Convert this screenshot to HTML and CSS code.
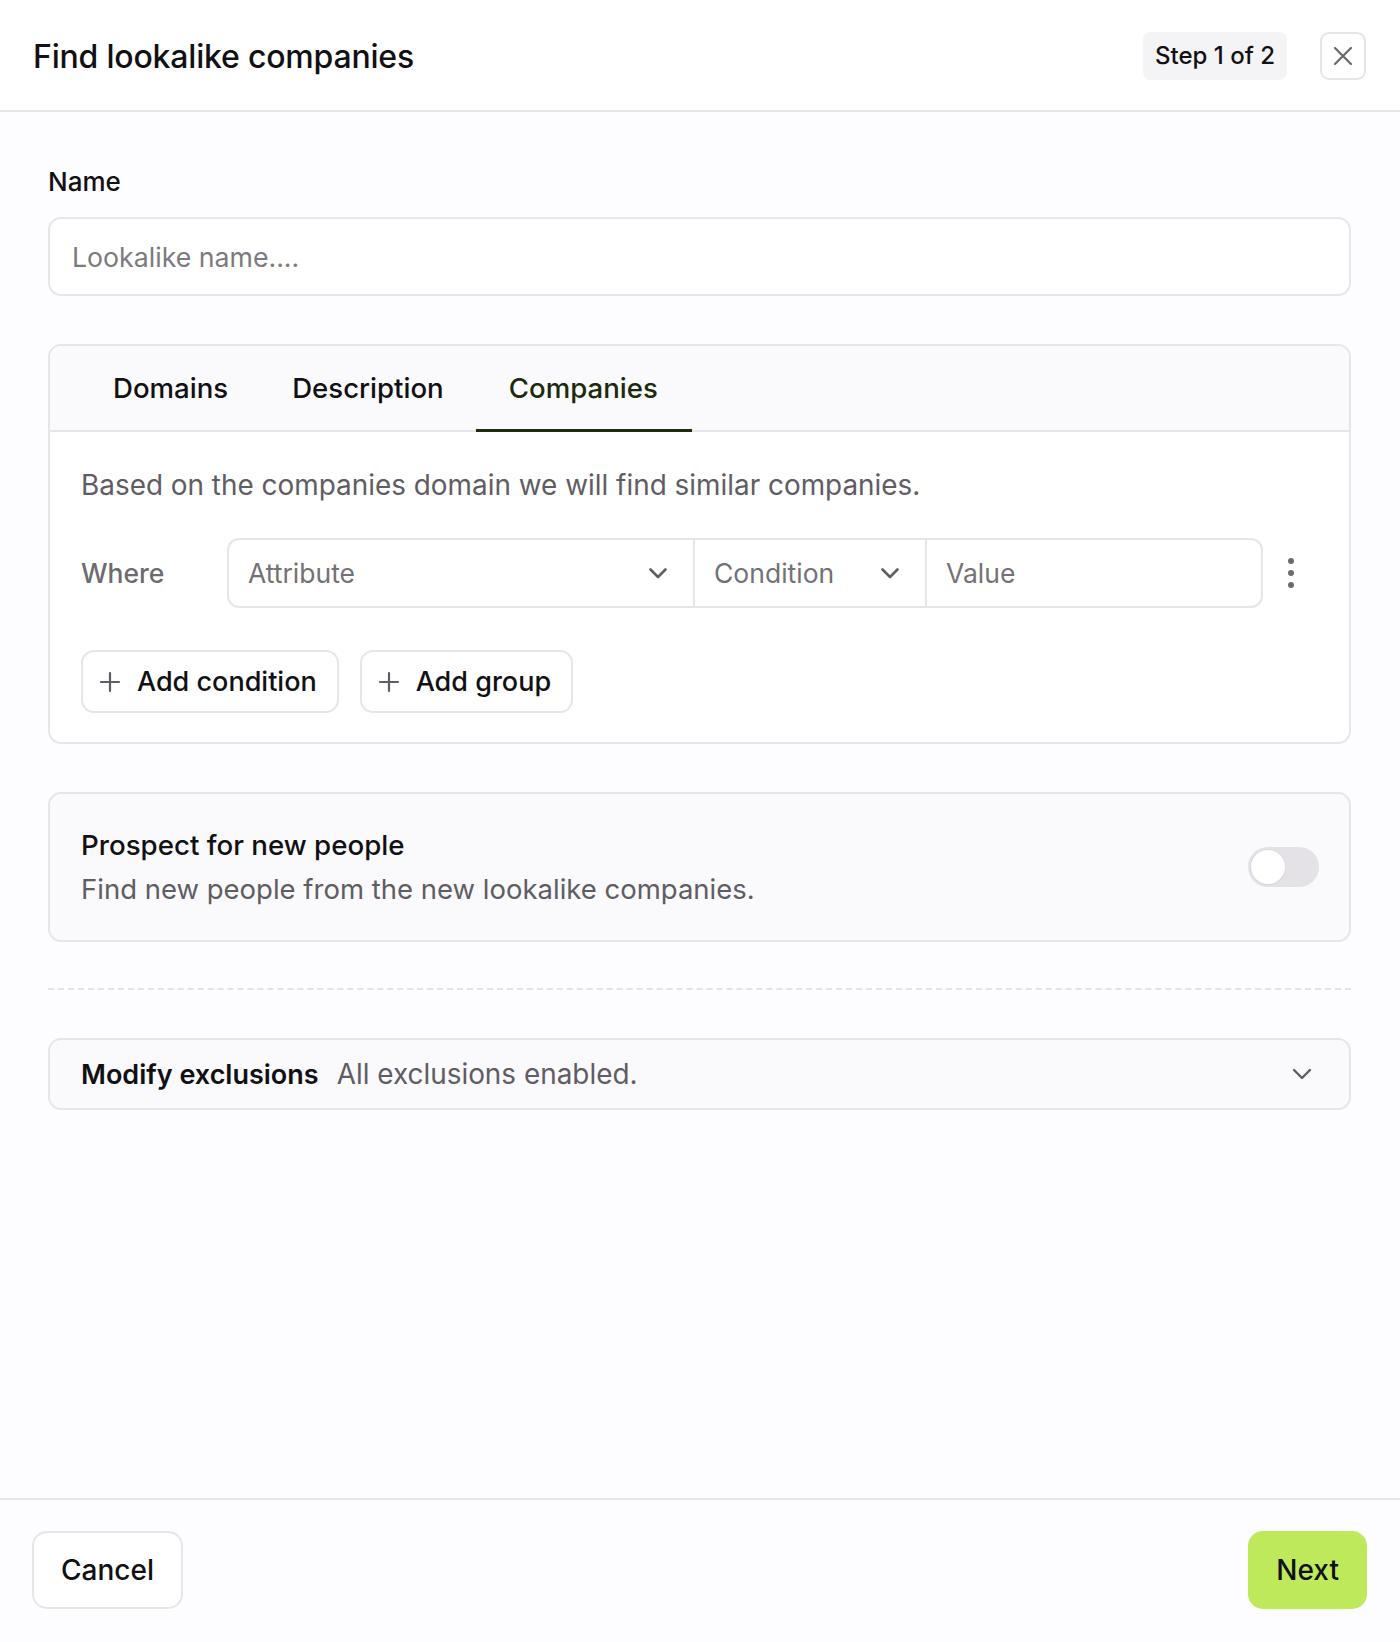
FILE: index.html
```html
<!DOCTYPE html>
<html>
<head>
  <link rel="stylesheet" href="styles.css">
</head>
<body>
  <div class="dialog">
    <div class="header">
      <div class="title">Find lookalike companies</div>
      <div class="header-actions">
        <div class="step-badge">Step 1 of 2</div>
        <button class="close-btn" aria-label="Close">
          <svg width="22" height="22" viewBox="0 0 22 22" fill="none"><path d="M3 3L19 19M19 3L3 19" stroke="#6b696e" stroke-width="2.2" stroke-linecap="round"/></svg>
        </button>
      </div>
    </div>

    <div class="main">
      <div class="field-group">
        <div class="label">Name</div>
        <div class="text-input placeholder">Lookalike name....</div>
      </div>

      <div class="card tabs-card">
        <div class="tabs">
          <div class="tab">Domains</div>
          <div class="tab">Description</div>
          <div class="tab active">Companies</div>
        </div>
        <div class="tab-body">
          <div class="hint">Based on the companies domain we will find similar companies.</div>
          <div class="filter-row">
            <div class="where">Where</div>
            <div class="filter-fields">
              <div class="field attribute">
                <span>Attribute</span>
                <svg width="20" height="12" viewBox="0 0 20 12" fill="none"><path d="M2.5 2.5L10 10L17.5 2.5" stroke="#5f5d63" stroke-width="2.6" stroke-linecap="round" stroke-linejoin="round"/></svg>
              </div>
              <div class="field condition">
                <span>Condition</span>
                <svg width="20" height="12" viewBox="0 0 20 12" fill="none"><path d="M2.5 2.5L10 10L17.5 2.5" stroke="#5f5d63" stroke-width="2.6" stroke-linecap="round" stroke-linejoin="round"/></svg>
              </div>
              <div class="field value">
                <span>Value</span>
              </div>
            </div>
            <div class="kebab">
              <span class="dot"></span><span class="dot"></span><span class="dot"></span>
            </div>
          </div>
          <div class="add-buttons">
            <button class="add-btn">
              <svg width="22" height="22" viewBox="0 0 22 22" fill="none"><path d="M11 2V20M2 11H20" stroke="#5f5d63" stroke-width="2.2" stroke-linecap="round"/></svg>
              Add condition
            </button>
            <button class="add-btn">
              <svg width="22" height="22" viewBox="0 0 22 22" fill="none"><path d="M11 2V20M2 11H20" stroke="#5f5d63" stroke-width="2.2" stroke-linecap="round"/></svg>
              Add group
            </button>
          </div>
        </div>
      </div>

      <div class="card prospect-card">
        <div class="prospect-text">
          <div class="prospect-title">Prospect for new people</div>
          <div class="prospect-sub">Find new people from the new lookalike companies.</div>
        </div>
        <div class="toggle"><span class="knob"></span></div>
      </div>

      <div class="dashed"></div>

      <div class="card exclusions">
        <span class="exclusions-title">Modify exclusions</span>
        <span class="exclusions-sub">All exclusions enabled.</span>
        <svg class="exclusions-chevron" width="22" height="14" viewBox="0 0 22 14" fill="none"><path d="M3 3L11 11L19 3" stroke="#5f5d63" stroke-width="2.4" stroke-linecap="round" stroke-linejoin="round"/></svg>
      </div>
    </div>

    <div class="footer">
      <button class="btn-cancel">Cancel</button>
      <button class="btn-next">Next</button>
    </div>
  </div>
</body>
</html>
```

FILE: styles.css
```css
body {
  font-family: Inter, "Noto Sans", sans-serif;
  margin: 0;
  padding: 0;
  background: #fdfcfe;
  color: #111013;
}
button {
  font-family: inherit;
  cursor: pointer;
}
.dialog {
  display: flex;
  flex-direction: column;
  min-height: 100vh;
}
.header {
  display: flex;
  align-items: center;
  justify-content: space-between;
  height: 112px;
  padding: 2px 34px 0 33px;
  box-sizing: border-box;
  background: #ffffff;
  border-bottom: 2px solid #e6e5e8;
}
.title {
  font-size: 32px;
  font-weight: 500;
  letter-spacing: -0.2px;
}
.header-actions {
  display: flex;
  align-items: center;
  gap: 33px;
}
.step-badge {
  background: #f4f3f6;
  border-radius: 8px;
  padding: 0 12px;
  height: 48px;
  line-height: 48px;
  font-size: 24px;
  font-weight: 500;
}
.close-btn {
  width: 46px;
  height: 48px;
  border: 2px solid #e6e4e9;
  border-radius: 9px;
  background: white;
  display: flex;
  align-items: center;
  justify-content: center;
  padding: 0;
}
.main {
  flex: 1;
  display: flex;
  flex-direction: column;
  gap: 48px;
  padding: 54px 49px 48px 48px;
}
.field-group {
  display: flex;
  flex-direction: column;
  gap: 19px;
}
.label {
  font-size: 26px;
  font-weight: 500;
  line-height: 32px;
}
.text-input {
  height: 75px;
  border: 2px solid #e7e5ea;
  border-radius: 13px;
  background: white;
  padding: 0 22px;
  display: flex;
  align-items: center;
  font-size: 26.7px;
}
.placeholder {
  color: #7c7a80;
}
.card {
  border: 2px solid #e7e5ea;
  border-radius: 13px;
  background: #faf9fc;
}
.tabs-card {
  background: white;
  overflow: hidden;
}
.tabs {
  display: flex;
  height: 84px;
  padding: 0 31px;
  background: #faf9fc;
  border-bottom: 2px solid #e7e5ea;
}
.tab {
  display: flex;
  align-items: center;
  padding: 0 32px;
  font-size: 27.6px;
  font-weight: 500;
  margin-bottom: -2px;
  border-bottom: 3px solid transparent;
}
.tab:last-child {
  padding: 0 34px 0 33px;
}
.tab.active {
  color: #1c2a0c;
  border-bottom-color: #1f2c10;
}
.tab-body {
  display: flex;
  flex-direction: column;
  padding: 35px 31px 29px;
}
.hint {
  font-size: 27.9px;
  line-height: 36px;
  color: #5f5d63;
}
.filter-row {
  display: flex;
  align-items: center;
  margin-top: 35px;
}
.where {
  width: 146px;
  font-size: 26.5px;
  font-weight: 500;
  color: #6d6b70;
}
.filter-fields {
  display: flex;
  height: 66px;
  border: 2px solid #e7e5ea;
  border-radius: 12px;
  background: white;
}
.field {
  display: flex;
  align-items: center;
  justify-content: space-between;
  padding: 0 25px 0 19px;
  font-size: 26.5px;
  color: #737176;
  border-left: 2px solid #e7e5ea;
}
.field:first-child {
  border-left: none;
}
.attribute { width: 420px; }
.condition { width: 186px; }
.value { width: 290px; }
.kebab {
  flex: 1;
  display: flex;
  flex-direction: column;
  align-items: center;
  gap: 6px;
}
.dot {
  width: 6px;
  height: 6px;
  border-radius: 50%;
  background: #6d6b70;
}
.add-buttons {
  display: flex;
  gap: 21px;
  margin-top: 42px;
}
.add-btn {
  display: flex;
  align-items: center;
  gap: 16px;
  height: 63px;
  padding: 0 20px 0 16px;
  border: 2px solid #e7e5ea;
  border-radius: 13px;
  background: white;
  font-size: 27px;
  font-weight: 500;
  color: #111013;
}
.prospect-card {
  display: flex;
  align-items: center;
  justify-content: space-between;
  padding: 29px 30px 29px 31px;
}
.prospect-title {
  font-size: 27.7px;
  font-weight: 500;
  line-height: 44px;
}
.prospect-sub {
  font-size: 27.5px;
  line-height: 44px;
  color: #5f5d63;
}
.toggle {
  width: 71px;
  height: 40px;
  border-radius: 20px;
  background: #e4e2e7;
  display: flex;
  align-items: center;
  padding: 0 3px;
  box-sizing: border-box;
}
.knob {
  width: 34px;
  height: 34px;
  border-radius: 50%;
  background: white;
  box-shadow: 0 0 0 1px #dcdadf, 0 1px 2px rgba(0, 0, 0, 0.08);
}
.dashed {
  border-top: 2px dashed #e3e2e6;
  margin: -2px 0 0;
}
.exclusions {
  display: flex;
  align-items: center;
  height: 68px;
  padding: 0 36px 0 31px;
  font-size: 27px;
}
.exclusions-title {
  font-weight: 600;
}
.exclusions-sub {
  margin-left: 18px;
  color: #5f5d63;
  font-size: 27.9px;
}
.exclusions-chevron {
  margin-left: auto;
}
.footer {
  display: flex;
  justify-content: space-between;
  align-items: center;
  padding: 31px 33px 33px 32px;
  border-top: 2px solid #e6e5e8;
}
.btn-cancel, .btn-next {
  height: 78px;
  border-radius: 15px;
  font-size: 28px;
  font-weight: 500;
  color: #111013;
}
.btn-cancel {
  padding: 0 27px;
  background: white;
  border: 2px solid #e7e5ea;
}
.btn-next {
  padding: 0 28px;
  background: #bde95b;
  border: none;
}
```
